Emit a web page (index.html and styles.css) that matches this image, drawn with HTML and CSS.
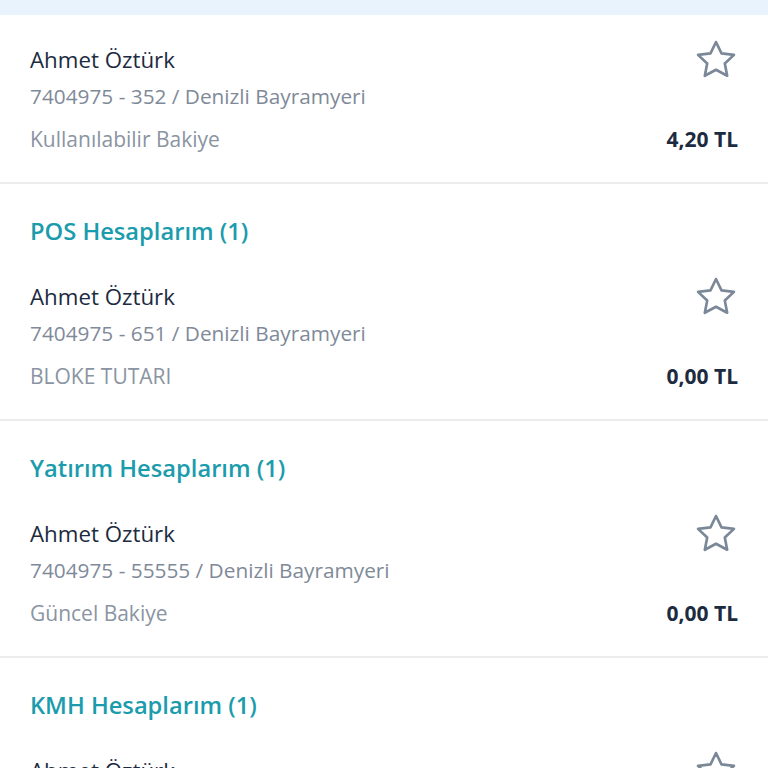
FILE: index.html
```html
<!DOCTYPE html>
<html lang="tr">
<head>
    <meta charset="UTF-8">
    <meta name="viewport" content="width=device-width, initial-scale=1.0">
    <title>Hesaplarım</title>
    <link rel="stylesheet" href="styles.css">
</head>
<body>
    <div class="topbar"></div>

    <div class="group first">
        <div class="account">
            <div class="row">
                <div class="name">Ahmet Öztürk</div>
                <svg class="star" viewBox="0 0 24 24"><polygon points="12,2.2 15,8.4 21.8,9.2 16.8,13.9 18.1,20.6 12,17.3 5.9,20.6 7.2,13.9 2.2,9.2 9,8.4"/></svg>
            </div>
            <div class="number">7404975 - 352 / Denizli Bayramyeri</div>
            <div class="row bottom">
                <div class="label">Kullanılabilir Bakiye</div>
                <div class="amount">4,20 TL</div>
            </div>
        </div>
    </div>

    <div class="group">
        <h2 class="group-title">POS Hesaplarım (1)</h2>
        <div class="account">
            <div class="row">
                <div class="name">Ahmet Öztürk</div>
                <svg class="star" viewBox="0 0 24 24"><polygon points="12,2.2 15,8.4 21.8,9.2 16.8,13.9 18.1,20.6 12,17.3 5.9,20.6 7.2,13.9 2.2,9.2 9,8.4"/></svg>
            </div>
            <div class="number">7404975 - 651 / Denizli Bayramyeri</div>
            <div class="row bottom">
                <div class="label">BLOKE TUTARI</div>
                <div class="amount">0,00 TL</div>
            </div>
        </div>
    </div>

    <div class="group">
        <h2 class="group-title">Yatırım Hesaplarım (1)</h2>
        <div class="account">
            <div class="row">
                <div class="name">Ahmet Öztürk</div>
                <svg class="star" viewBox="0 0 24 24"><polygon points="12,2.2 15,8.4 21.8,9.2 16.8,13.9 18.1,20.6 12,17.3 5.9,20.6 7.2,13.9 2.2,9.2 9,8.4"/></svg>
            </div>
            <div class="number">7404975 - 55555 / Denizli Bayramyeri</div>
            <div class="row bottom">
                <div class="label">Güncel Bakiye</div>
                <div class="amount">0,00 TL</div>
            </div>
        </div>
    </div>

    <div class="group">
        <h2 class="group-title">KMH Hesaplarım (1)</h2>
        <div class="account">
            <div class="row">
                <div class="name">Ahmet Öztürk</div>
                <svg class="star" viewBox="0 0 24 24"><polygon points="12,2.2 15,8.4 21.8,9.2 16.8,13.9 18.1,20.6 12,17.3 5.9,20.6 7.2,13.9 2.2,9.2 9,8.4"/></svg>
            </div>
            <div class="number">7404975 - 1 / Denizli Bayramyeri</div>
            <div class="row bottom">
                <div class="label">Kullanılabilir Bakiye</div>
                <div class="amount">0,00 TL</div>
            </div>
        </div>
    </div>
</body>
</html>
```

FILE: styles.css
```css
body {
    font-family: "Open Sans", "Noto Sans", sans-serif;
    margin: 0;
    background: #ffffff;
    color: #1c2b3f;
}
.topbar {
    height: 15px;
    background: #e8f3fd;
}
.group {
    border-top: 2px solid #ececec;
}
.group.first {
    border-top: none;
}
.group-title {
    margin: 0;
    padding: 32px 30px 0;
    font-size: 23.7px;
    line-height: 30px;
    font-weight: 600;
    color: #1b9cad;
}
.account {
    padding: 37px 30px 29px;
}
.first .account {
    padding-top: 31px;
}
.row {
    display: flex;
    justify-content: space-between;
    align-items: center;
    height: 28px;
}
.name {
    font-size: 22.3px;
    line-height: 28px;
    font-weight: 500;
    color: #1c2b3f;
}
.star {
    width: 44px;
    height: 44px;
    fill: none;
    stroke: #7b8898;
    stroke-width: 1.45;
    stroke-linejoin: round;
}
.number {
    margin-top: 8px;
    font-size: 20.8px;
    line-height: 28px;
    color: #7f8a99;
}
.bottom {
    margin-top: 15px;
}
.label {
    font-size: 21px;
    line-height: 28px;
    color: #8a94a2;
}
.amount {
    font-size: 21px;
    line-height: 28px;
    font-weight: 700;
    color: #1c2b3f;
}
```
